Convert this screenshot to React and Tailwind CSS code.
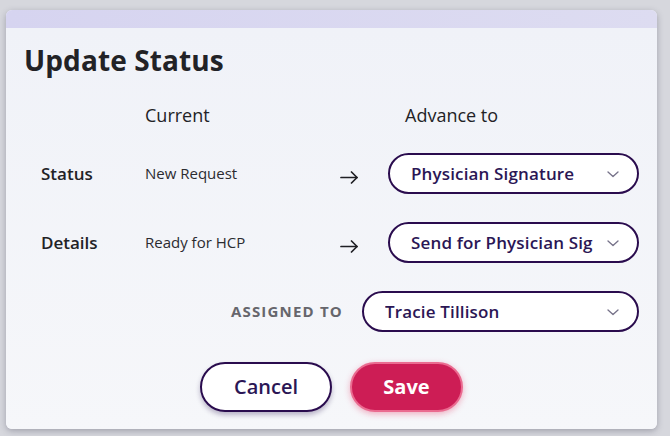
import React from "react";

const font = { fontFamily: '"Open Sans", "Noto Sans", sans-serif' };

function Chevron() {
  return (
    <svg width="20" height="20" viewBox="0 0 24 24" fill="none" stroke="#77738a" strokeWidth="1.6" strokeLinecap="round" strokeLinejoin="round" className="shrink-0 ml-[10px]">
      <path d="m6 9.5 6 5.5 6-5.5" />
    </svg>
  );
}

function Arrow() {
  return (
    <svg width="19" height="13" viewBox="0 0 19 13" fill="none" stroke="#1f1f24" strokeWidth="1.7" strokeLinecap="round" strokeLinejoin="round" className="mt-[8px]">
      <path d="M1 6.5h16" />
      <path d="M11.5 1l5.5 5.5-5.5 5.5" />
    </svg>
  );
}

function Select({ value, className = "" }) {
  return (
    <div className={"h-[41px] rounded-full border-2 border-[#2a0c4e] bg-white flex items-center pl-[21px] pr-[14px] " + className}>
      <span className="flex-1 min-w-0 overflow-hidden whitespace-nowrap text-[17px] tracking-[0.15px] font-semibold text-[#2b1655] leading-[26px]">{value}</span>
      <Chevron />
    </div>
  );
}

export default function App() {
  return (
    <div className="w-[670px] h-[436px] bg-[#d6d7dd] pt-[10px] pl-[6px] overflow-hidden" style={font}>
      <div className="w-[651px] h-[419px] rounded-[6px] overflow-hidden bg-[#f2f3f8] shadow-[0_2px_6px_rgba(60,60,80,0.35)] flex flex-col">
        <div className="h-[18px] bg-gradient-to-r from-[#d6d4f0] to-[#dddcf1] shrink-0" />
        <div className="flex-1 bg-gradient-to-b from-[#f0f2f8] to-[#f6f7fa] flex flex-col pl-[35px] pr-[18px]">
          <h1 className="mt-[14px] h-[36px] leading-[36px] text-[28px] tracking-[0.1px] font-bold text-[#222226] -ml-[17px]">Update Status</h1>

          <div className="grid grid-cols-[104px_195px_48px_251px] mt-[24px] h-[24px] items-center text-[18px] font-medium text-[#222226]">
            <div />
            <div>Current</div>
            <div />
            <div className="pl-[17px]">Advance to</div>
          </div>

          <div className="grid grid-cols-[104px_195px_48px_251px] mt-[27px] items-center">
            <div className="text-[17px] font-semibold text-[#222226]">Status</div>
            <div className="text-[15px] text-[#2b2b30]">New Request</div>
            <div className="flex"><Arrow /></div>
            <Select value="Physician Signature" />
          </div>

          <div className="grid grid-cols-[104px_195px_48px_251px] mt-[28px] items-center">
            <div className="text-[17px] font-semibold text-[#222226]">Details</div>
            <div className="text-[15px] text-[#2b2b30]">Ready for HCP</div>
            <div className="flex"><Arrow /></div>
            <Select value="Send for Physician Signature" />
          </div>

          <div className="flex justify-end items-center mt-[28px] gap-[19px]">
            <span className="text-[15px] font-bold tracking-[1.2px] text-[#66666c]">ASSIGNED TO</span>
            <Select value="Tracie Tillison" className="w-[277px]" />
          </div>

          <div className="flex justify-center gap-[18px] mt-[30px] -ml-[17px]">
            <button className="w-[132px] h-[50px] rounded-full border-[2.5px] border-[#2a0c4e] bg-white text-[20px] font-semibold text-[#2b1655] shadow-[0_3px_5px_rgba(40,20,80,0.3)]">Cancel</button>
            <button className="w-[113px] h-[50px] rounded-full border-2 border-[#ea6b90] bg-[#cd1d55] text-[20px] font-bold text-white shadow-[0_2px_6px_rgba(230,80,120,0.45)]">Save</button>
          </div>
        </div>
      </div>
    </div>
  );
}
